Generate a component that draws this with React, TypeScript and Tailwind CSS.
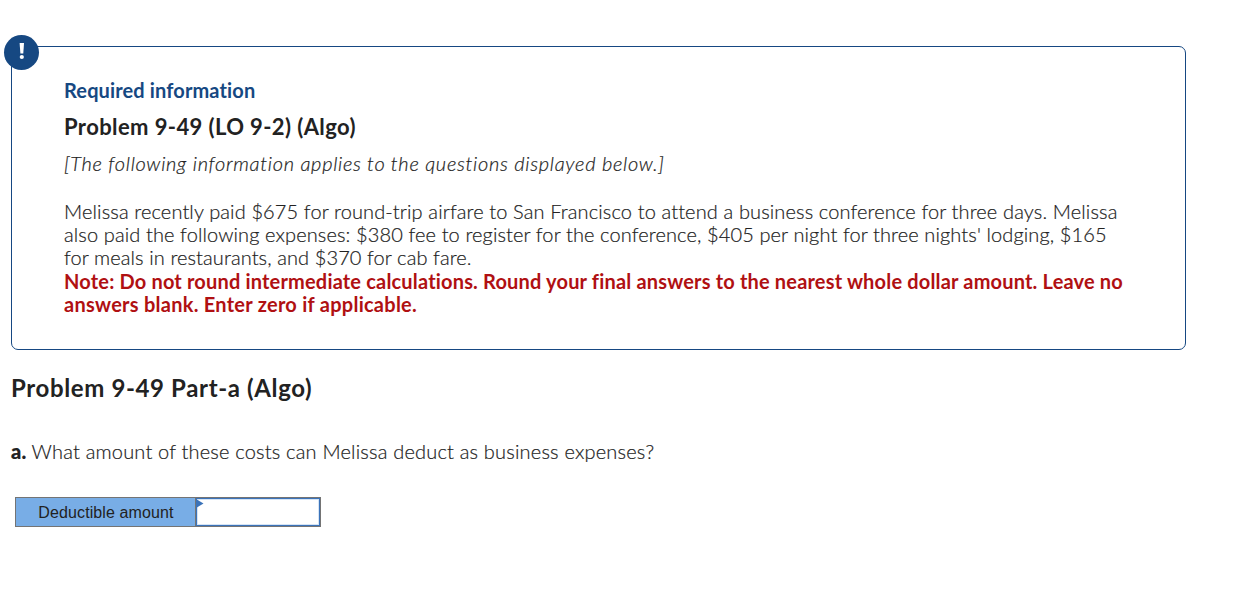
export default function App() {
  return (
    <main className="h-[600px] overflow-hidden bg-white pl-[11px] pt-[46px] font-['Lato','Open_Sans',sans-serif] text-[20px] leading-[23px] text-[#222222] [font-variant-ligatures:none]">
      <section className="relative h-[304px] w-[1175px] rounded-[7px] border border-[#164882] pl-[52px] pt-[31px] whitespace-nowrap">
        <div className="absolute left-[-8px] top-[-12px] flex size-[35px] items-center justify-center rounded-full bg-[#164882]">
          <svg width="6" height="18" viewBox="0 0 6 18" className="mb-[3px]" fill="white" aria-hidden="true">
            <path d="M.6 1h4.4L4.3 11.5H1.4z" />
            <circle cx="2.8" cy="15" r="2.1" />
          </svg>
        </div>
        <h1 className="h-[36px] pt-px text-[20px] font-bold tracking-[0.13px] text-[#164882]">Required information</h1>
        <h2 className="h-[38px] pt-px text-[22px] font-bold tracking-[0.4px]">Problem 9-49 (LO 9-2) (Algo)</h2>
        <p className="h-[48px] font-light italic tracking-[0.7px] [-webkit-text-stroke:0.2px_#222222]">[The following information applies to the questions displayed below.]</p>
        <div className="font-light [-webkit-text-stroke:0.2px_#222222]">
          <p className="tracking-[0.128px]">Melissa recently paid $675 for round-trip airfare to San Francisco to attend a business conference for three days. Melissa</p>
          <p className="tracking-[0.115px]">also paid the following expenses: $380 fee to register for the conference, $405 per night for three nights&apos; lodging, $165</p>
          <p className="tracking-[0.1px]">for meals in restaurants, and $370 for cab fare.</p>
        </div>
        <p className="pt-px font-bold tracking-[0.175px] text-[#b01012]">Note: Do not round intermediate calculations. Round your final answers to the nearest whole dollar amount. Leave no</p>
        <p className="font-bold tracking-[0.26px] text-[#b01012]">answers blank. Enter zero if applicable.</p>
      </section>
      <h2 className="mt-[26px] text-[24px] font-bold tracking-[0.63px]">Problem 9-49 Part-a (Algo)</h2>
      <p className="mt-[41px] whitespace-nowrap font-light tracking-[0.19px] [-webkit-text-stroke:0.2px_#222222]">
        <b className="font-black">a.</b> What amount of these costs can Melissa deduct as business expenses?
      </p>
      <div className="ml-[4px] mt-[34px] flex h-[30px] w-[306px] border border-[#747474] font-['Liberation_Sans',Arial,sans-serif] text-[16px]">
        <label htmlFor="amount" className="flex w-[179px] items-center justify-center bg-[#78ade6] pl-px tracking-[0.11px]">Deductible amount</label>
        <div className="relative flex-1 border-l border-[#747474]">
          <input id="amount" className="block size-full border border-[#3b73b9] bg-white outline-none ring-1 ring-inset ring-[#d5e4f5]" />
          <svg className="absolute left-0 top-0" width="8" height="11" viewBox="0 0 8 11" aria-hidden="true">
            <path d="M0 1v9l7.5-4.5z" fill="#3b73b9" />
          </svg>
        </div>
      </div>
    </main>
  );
}
